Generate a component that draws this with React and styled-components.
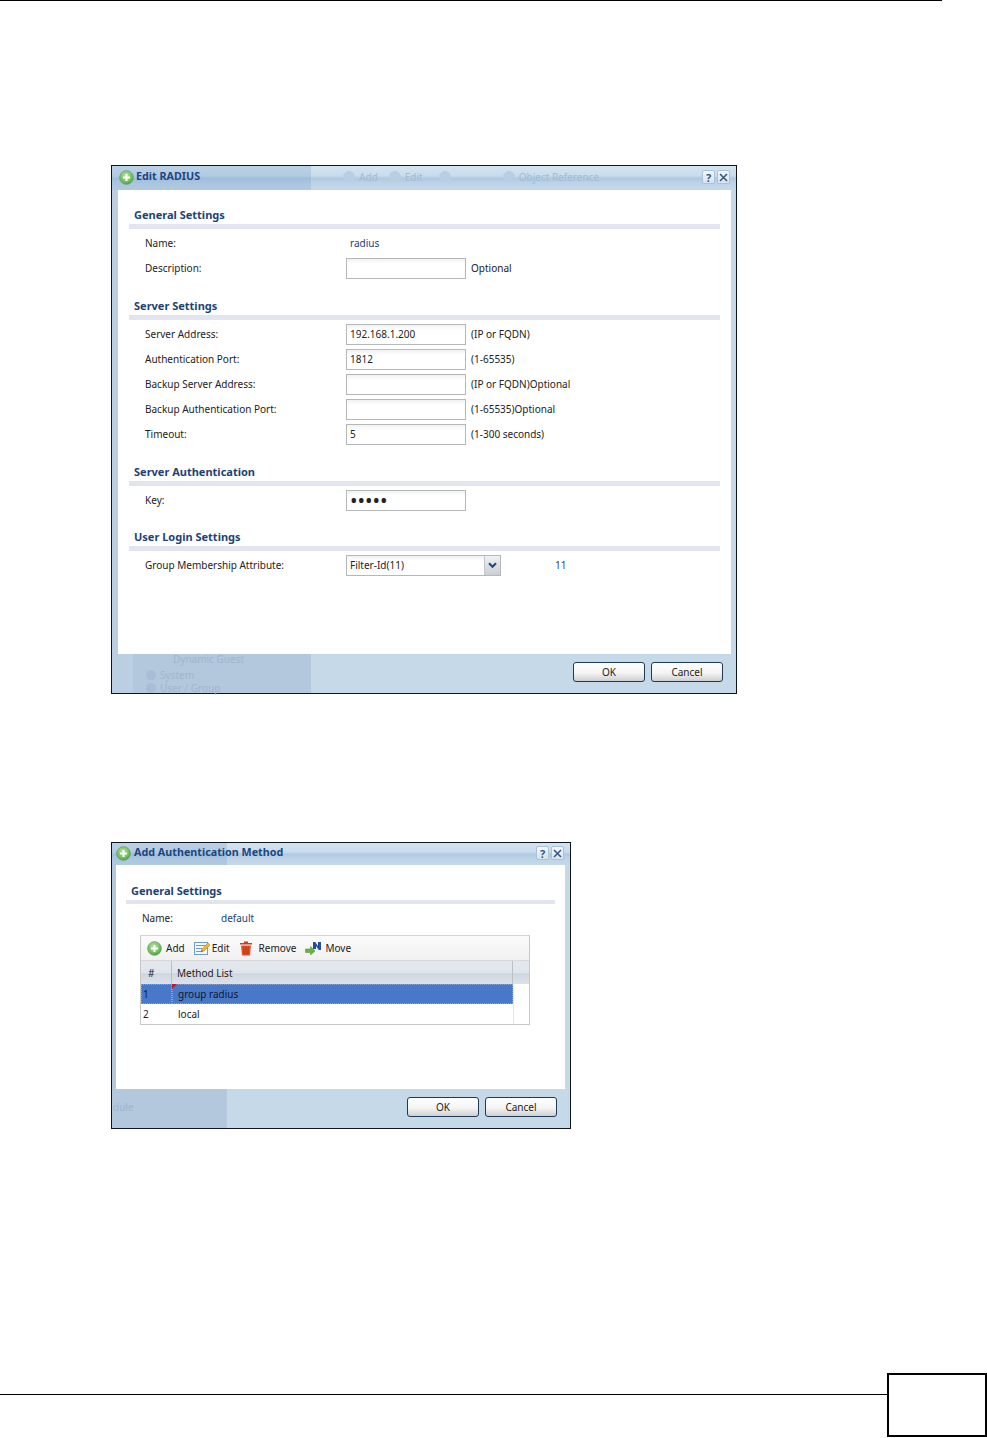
import React from 'react';
import styled, { createGlobalStyle } from 'styled-components';

const GlobalStyle = createGlobalStyle`
  body {
    margin: 0;
    background: #fff;
    font-family: "Noto Sans", "Liberation Sans", sans-serif;
    font-size: 10px;
    color: #222;
  }
`;

const Page = styled.div`
  display: flex;
  flex-direction: column;
  width: 987px;
  height: 1438px;
  box-sizing: border-box;
  padding-bottom: 1px;
  overflow: hidden;
`;

const HeaderRule = styled.div`
  width: 942px;
  height: 1px;
  background: #000;
  flex: none;
`;

const DialogFrame = styled.div`
  flex: none;
  display: flex;
  flex-direction: column;
  box-sizing: border-box;
  width: ${p => p.$width}px;
  height: ${p => p.$height}px;
  margin: ${p => p.$top}px 0 0 111px;
  border: 1px solid #10151c;
  padding: 0 5px 0 ${p => p.$left}px;
  background: linear-gradient(
    to right,
    #bccfe2 ${p => p.$strip}px,
    #b3c7dd ${p => p.$strip}px,
    #b3c7dd ${p => p.$pane}px,
    #c6d9e9 ${p => p.$pane}px
  );
`;

const TitleBar = styled.div`
  flex: none;
  display: flex;
  align-items: center;
  box-sizing: border-box;
  height: ${p => p.$height}px;
  margin: 0 -5px 0 ${p => -p.$left}px;
  padding: 0 6px ${p => p.$lift}px ${p => p.$pad}px;
  background:
    linear-gradient(to right, rgba(120, 160, 200, 0.28) ${p => p.$pane}px, transparent ${p => p.$pane}px),
    linear-gradient(to bottom, #d3e3f0 0%, #cadcec 40%, #afcae2 52%, #bdd3e7 72%, #c5d9ea 100%);
`;

const TitleText = styled.span`
  margin-left: ${p => p.$gap}px;
  padding-bottom: 2px;
  font-weight: bold;
  font-size: 10.75px;
  color: #1d4580;
  white-space: nowrap;
`;

const GhostItem = styled.span`
  display: flex;
  align-items: center;
  gap: 4px;
  margin-left: ${p => p.$gap}px;
  color: #a3bbd3;
  white-space: nowrap;
`;

const GhostDot = styled.span`
  width: 12px;
  height: 12px;
  border-radius: 50%;
  background: #b8cfe3;
`;

const TitleButtons = styled.div`
  margin-left: auto;
  display: flex;
  gap: 2px;
`;

const TitleButton = styled.div`
  width: 13px;
  height: 14px;
  box-sizing: border-box;
  display: flex;
  align-items: center;
  justify-content: center;
  border: 1px solid #a9c3da;
  border-radius: 2px;
  background: linear-gradient(to bottom, #f2f7fb, #d6e4f0);
  color: #33557f;
  font-weight: bold;
  font-size: 11px;
  line-height: 1;
`;

const DialogBody = styled.div`
  flex: 1;
  min-height: 0;
  display: flex;
  flex-direction: column;
  padding: 0 ${p => p.$side}px;
  background: #fff;
`;

const Section = styled.section`
  padding-top: ${p => p.$top || 18}px;
`;

const SectionTitle = styled.div`
  height: 14px;
  line-height: 14px;
  padding-left: 5px;
  font-weight: bold;
  font-size: 11px;
  color: #1d4276;
`;

const SectionBar = styled.div`
  height: ${p => p.$height || 5}px;
  margin: 2px 0;
  background: #e2e4ef;
`;

const Row = styled.div`
  display: flex;
  align-items: center;
  height: 25px;
  padding-left: 16px;
`;

const Label = styled.span`
  flex: none;
  width: 201px;
  padding-bottom: 2px;
`;

const Value = styled.span`
  color: #1d4276;
  padding: 0 0 2px 4px;
`;

const TextBox = styled.input`
  flex: none;
  box-sizing: border-box;
  width: 120px;
  height: 21px;
  margin: 0;
  padding: 0 3px ${p => (p.type === 'password' ? 0 : 2)}px;
  border: 1px solid #b5b8bb;
  background: linear-gradient(to bottom, #f1f1f1, #fff 5px);
  font: ${p => (p.type === 'password' ? 20 : 10)}px "Noto Sans", "Liberation Sans", sans-serif;
  color: #222;
  outline: none;
`;

const Hint = styled.span`
  margin-left: 5px;
  padding-bottom: 2px;
  white-space: nowrap;
`;

const SelectBox = styled.div`
  flex: none;
  box-sizing: border-box;
  display: flex;
  align-items: center;
  justify-content: space-between;
  width: 155px;
  height: 21px;
  padding-left: 3px;
  border: 1px solid #b5b8bb;
  background: linear-gradient(to bottom, #f1f1f1, #fff 5px);
`;

const SelectText = styled.span`
  padding-bottom: 2px;
`;

const SelectArrow = styled.div`
  width: 15px;
  height: 19px;
  display: flex;
  align-items: center;
  justify-content: center;
  border-left: 1px solid #c4c8cc;
  background: linear-gradient(to bottom, #f0f2f4, #c9ced3);
`;

const AttributeCode = styled.span`
  margin-left: 54px;
  padding-bottom: 2px;
  color: #1d4276;
`;

const DialogFooter = styled.div`
  flex: none;
  box-sizing: border-box;
  height: 39px;
  display: flex;
  align-items: flex-start;
  justify-content: flex-end;
  gap: 6px;
  padding: 8px ${p => p.$right}px 0 0;
  position: relative;
`;

const FooterGhost = styled.span`
  position: absolute;
  left: ${p => p.$x}px;
  top: ${p => p.$y}px;
  display: flex;
  align-items: center;
  gap: 2px;
  height: 10px;
  line-height: 10px;
  color: #a0b6ce;
  white-space: nowrap;
`;

const FooterGhostDot = styled.span`
  width: 10px;
  height: 10px;
  margin-right: 2px;
  border-radius: 50%;
  background: #a8bed6;
`;

const PushButton = styled.button`
  width: 72px;
  height: 20px;
  padding: 0;
  border: 1px solid #1e3a58;
  border-radius: 3px;
  background: linear-gradient(to bottom, #fff 0%, #f4f4f4 55%, #cfcfcf 100%);
  font: 10px "Noto Sans", "Liberation Sans", sans-serif;
  color: #222;
`;

const NameRow = styled.div`
  display: flex;
  align-items: center;
  height: 20px;
  margin-top: 4px;
  padding-left: 16px;
`;

const NameLabel = styled.span`
  width: 79px;
`;

const NameValue = styled.span`
  color: #1d4276;
`;

const GridBox = styled.div`
  box-sizing: border-box;
  width: 390px;
  height: 90px;
  margin: 7px 0 0 14px;
  border: 1px solid #c8c8c8;
  border-top-color: #d4d4d4;
`;

const Toolbar = styled.div`
  display: flex;
  align-items: center;
  height: 25px;
  padding-left: 6px;
  background: linear-gradient(to bottom, #fbfbfb, #f1f1f1);
  border-bottom: 1px solid #d8d8d8;
  box-sizing: border-box;
`;

const ToolItem = styled.div`
  display: flex;
  align-items: center;
  gap: ${p => p.$inner}px;
  margin-right: ${p => p.$gap}px;
`;

const GridRow = styled.div`
  display: grid;
  grid-template-columns: 31px 341px 1fr;
  height: ${p => p.$height}px;
  align-items: center;
`;

const HeaderCell = styled.div`
  height: 100%;
  display: flex;
  align-items: center;
  padding-left: ${p => p.$pad}px;
  border-right: 1px solid #b9c0c8;
  background: linear-gradient(to bottom, #e4e8ee 0%, #e0e5ec 50%, #d0d6de 55%, #dde2e9 100%);
  box-sizing: border-box;
  &:last-child { border-right: 0; }
`;

const DataCell = styled.div`
  position: relative;
  height: 100%;
  display: flex;
  align-items: center;
  padding-left: ${p => p.$pad}px;
  box-sizing: border-box;
  background: ${p => (p.$selected ? '#4a78c8' : '#fff')};
  color: ${p => (p.$selected ? '#10182a' : '#222')};
  ${p => p.$selected && 'outline: 1px dotted #8aa4d8; outline-offset: -1px;'}
`;

const FillerCell = styled.div`
  height: 100%;
  border-left: 1px solid #e8e8e8;
  background: #fff;
`;

const DirtyMark = styled.span`
  position: absolute;
  left: 0;
  top: 0;
  border-top: 5px solid #c4162a;
  border-right: 5px solid transparent;
`;

const PageFooter = styled.footer`
  flex: none;
  display: flex;
  align-items: flex-start;
  margin-top: auto;
`;

const FooterRule = styled.div`
  flex: 1;
  height: 1px;
  margin-top: 21px;
  background: #000;
`;

const PageNumberBox = styled.div`
  flex: none;
  box-sizing: border-box;
  width: 100px;
  height: 64px;
  border: 2px solid #000;
`;

const AddIcon = ({ id, size = 15 }) => (
  <svg width={size} height={size} viewBox="0 0 16 16" style={{ flex: 'none' }}>
    <defs>
      <radialGradient id={id} cx="45%" cy="35%" r="70%">
        <stop offset="0%" stopColor="#b8e39c" />
        <stop offset="70%" stopColor="#6dbb59" />
        <stop offset="100%" stopColor="#3f9440" />
      </radialGradient>
    </defs>
    <circle cx="8" cy="8" r="7.3" fill={`url(#${id})`} stroke="#5f9f5d" strokeWidth="0.8" />
    <path d="M8 4.2v7.6M4.2 8h7.6" stroke="#fff" strokeWidth="2.2" />
  </svg>
);

const EditIcon = () => (
  <svg width="16" height="15" viewBox="0 0 16 15">
    <rect x="0.5" y="1.5" width="13" height="12" fill="#f4f8fc" stroke="#6f9bc8" />
    <path d="M2 4.5h10M2 7.5h6M2 10.5h5" stroke="#6f9bc8" />
    <path d="M7 11l1-3 6-6 2 2-6 6z" fill="#f0b93a" stroke="#b57f1c" strokeWidth="0.6" />
    <path d="M7 11l1-2 1 1z" fill="#555" />
  </svg>
);

const TrashIcon = () => (
  <svg width="14" height="16" viewBox="0 0 14 16">
    <path d="M5 1.5h4v1.5h4v1.6H1V3h4z" fill="#c9401c" />
    <path d="M2 5.5h10l-1 10H3z" fill="#e2562a" />
    <path d="M4.8 6.5l.3 8M7 6.5v8M9.2 6.5l-.3 8" stroke="#a8300f" strokeWidth="0.9" />
  </svg>
);

const MoveIcon = () => (
  <svg width="17" height="14" viewBox="0 0 17 14">
    <path d="M0.5 8h5V5.5L10 10l-4.5 4v-2.5h-5z" fill="#69b33f" stroke="#4b8f2b" strokeWidth="0.5" />
    <path d="M8 8V1h2.2l2.8 4V1H16v8h-2.2L11 5v3z" fill="#1f4f9e" />
  </svg>
);

const ChevronIcon = () => (
  <svg width="9" height="7" viewBox="0 0 9 7">
    <path d="M1 1.2l3.5 3.6L8 1.2" fill="none" stroke="#26476f" strokeWidth="2" />
  </svg>
);

const CloseIcon = () => (
  <svg width="9" height="9" viewBox="0 0 9 9">
    <path d="M1 1l7 7M8 1L1 8" stroke="#33557f" strokeWidth="1.5" />
  </svg>
);

const Field = ({ label, value, hint, type = 'text' }) => (
  <Row>
    <Label>{label}</Label>
    <TextBox type={type} value={value} readOnly />
    {hint && <Hint>{hint}</Hint>}
  </Row>
);

const SettingsSection = ({ title, top, barHeight, children }) => (
  <Section $top={top}>
    <SectionTitle>{title}</SectionTitle>
    <SectionBar $height={barHeight} />
    {children}
  </Section>
);

const Title = ({ id, text, gap, children }) => (
  <>
    <AddIcon id={id} />
    <TitleText $gap={gap}>{text}</TitleText>
    {children}
    <TitleButtons>
      <TitleButton>?</TitleButton>
      <TitleButton>
        <CloseIcon />
      </TitleButton>
    </TitleButtons>
  </>
);

const EditRadius = () => (
  <DialogFrame $width={626} $height={529} $top={164} $left={6} $strip={21} $pane={199}>
    <TitleBar $height={24} $left={6} $pane={199} $pad={7} $lift={2}>
      <Title id="radiusAdd" text="Edit RADIUS" gap={2}>
        <GhostItem $gap={143}><GhostDot />Add</GhostItem>
        <GhostItem $gap={11}><GhostDot />Edit</GhostItem>
        <GhostItem $gap={16}><GhostDot /></GhostItem>
        <GhostItem $gap={52}><GhostDot />Object Reference</GhostItem>
      </Title>
    </TitleBar>
    <DialogBody $side={11}>
      <SettingsSection title="General Settings">
        <Row>
          <Label>Name:</Label>
          <Value>radius</Value>
        </Row>
        <Field label="Description:" value="" hint="Optional" />
      </SettingsSection>
      <SettingsSection title="Server Settings">
        <Field label="Server Address:" value="192.168.1.200" hint="(IP or FQDN)" />
        <Field label="Authentication Port:" value="1812" hint="(1-65535)" />
        <Field label="Backup Server Address:" value="" hint="(IP or FQDN)Optional" />
        <Field label="Backup Authentication Port:" value="" hint="(1-65535)Optional" />
        <Field label="Timeout:" value="5" hint="(1-300 seconds)" />
      </SettingsSection>
      <SettingsSection title="Server Authentication">
        <Field label="Key:" value="12345" type="password" />
      </SettingsSection>
      <SettingsSection title="User Login Settings" top={17}>
        <Row>
          <Label>Group Membership Attribute:</Label>
          <SelectBox>
            <SelectText>Filter-Id(11)</SelectText>
            <SelectArrow>
              <ChevronIcon />
            </SelectArrow>
          </SelectBox>
          <AttributeCode>11</AttributeCode>
        </Row>
      </SettingsSection>
    </DialogBody>
    <DialogFooter $right={8}>
      <FooterGhost $x={55} $y={0}>Dynamic Guest</FooterGhost>
      <FooterGhost $x={28} $y={16}><FooterGhostDot />System</FooterGhost>
      <FooterGhost $x={28} $y={29}><FooterGhostDot />User / Group</FooterGhost>
      <PushButton>OK</PushButton>
      <PushButton>Cancel</PushButton>
    </DialogFooter>
  </DialogFrame>
);

const AddMethod = () => (
  <DialogFrame $width={460} $height={287} $top={148} $left={4} $strip={0} $pane={115}>
    <TitleBar $height={22} $left={4} $pane={115} $pad={4} $lift={2}>
      <Title id="methodAdd" text="Add Authentication Method" gap={3} />
    </TitleBar>
    <DialogBody $side={10}>
      <SettingsSection title="General Settings" top={19} barHeight={4}>
        <NameRow>
          <NameLabel>Name:</NameLabel>
          <NameValue>default</NameValue>
        </NameRow>
        <GridBox>
          <Toolbar>
            <ToolItem $inner={4} $gap={9}>
              <AddIcon id="toolAdd" />
              Add
            </ToolItem>
            <ToolItem $inner={2} $gap={9}>
              <EditIcon />
              Edit
            </ToolItem>
            <ToolItem $inner={6} $gap={9}>
              <TrashIcon />
              Remove
            </ToolItem>
            <ToolItem $inner={3} $gap={0}>
              <MoveIcon />
              Move
            </ToolItem>
          </Toolbar>
          <GridRow $height={23}>
            <HeaderCell $pad={7}>#</HeaderCell>
            <HeaderCell $pad={5}>Method List</HeaderCell>
            <HeaderCell />
          </GridRow>
          <GridRow $height={20}>
            <DataCell $selected $pad={2}>1</DataCell>
            <DataCell $selected $pad={6}>
              <DirtyMark />
              group radius
            </DataCell>
            <FillerCell />
          </GridRow>
          <GridRow $height={20}>
            <DataCell $pad={2}>2</DataCell>
            <DataCell $pad={6}>local</DataCell>
            <FillerCell />
          </GridRow>
        </GridBox>
      </SettingsSection>
    </DialogBody>
    <DialogFooter $right={8}>
      <FooterGhost $x={-3} $y={13}>dule</FooterGhost>
      <PushButton>OK</PushButton>
      <PushButton>Cancel</PushButton>
    </DialogFooter>
  </DialogFrame>
);

const App = () => (
  <Page>
    <GlobalStyle />
    <HeaderRule />
    <EditRadius />
    <AddMethod />
    <PageFooter>
      <FooterRule />
      <PageNumberBox />
    </PageFooter>
  </Page>
);

export default App;
